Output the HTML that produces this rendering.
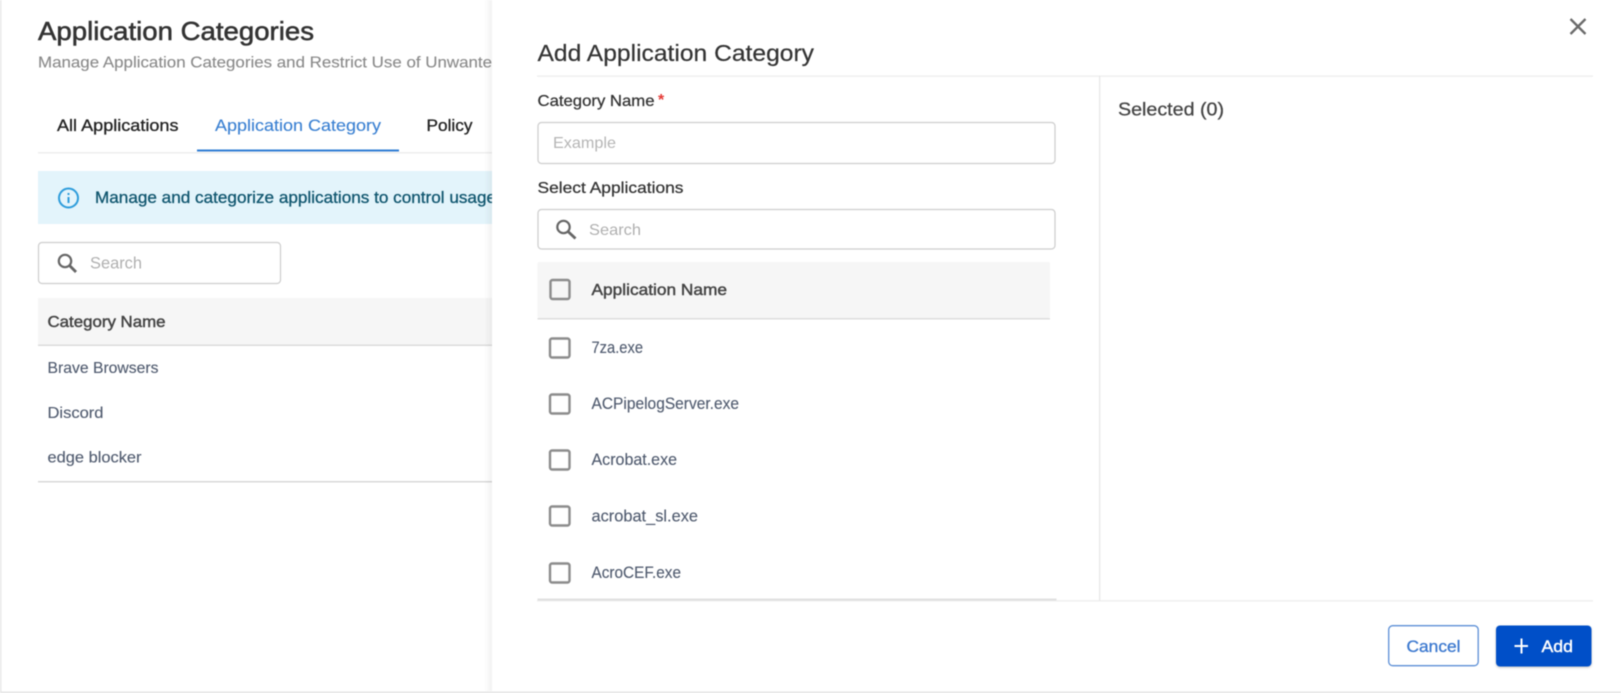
<!DOCTYPE html>
<html lang="en">
<head>
<meta charset="utf-8">
<title>Add Application Category</title>
<style>
html,body{margin:0;padding:0;background:#fff;width:1621px;height:693px;overflow:hidden}
svg{display:block;filter:blur(.4px)}
text{font-family:"Liberation Sans",sans-serif}
</style>
</head>
<body>
<svg width="1621" height="693" viewBox="0 0 1621 693" xmlns="http://www.w3.org/2000/svg">
<defs>
<linearGradient id="sh" x1="0" x2="1" y1="0" y2="0">
<stop offset="0" stop-color="#000" stop-opacity="0"/>
<stop offset="1" stop-color="#000" stop-opacity=".05"/>
</linearGradient>
<clipPath id="left"><rect x="0" y="0" width="492" height="693"/></clipPath>
<filter id="btn" x="-10%" y="-10%" width="120%" height="130%"><feDropShadow dx="0" dy="1" stdDeviation="1" flood-color="#000" flood-opacity=".25"/></filter>
</defs>
<rect width="1621" height="693" fill="#fff"/>
<rect x="0" y="0" width="1.5" height="693" fill="#e8e8e8"/>
<rect x="0" y="691.5" width="1621" height="1.5" fill="#e4e4e4"/>

<g clip-path="url(#left)">
<text x="38" y="40" font-size="26" fill="#333" stroke="#333" stroke-width=".55" textLength="276" lengthAdjust="spacingAndGlyphs">Application Categories</text>
<text x="38" y="67.500" font-size="16" fill="#8a8a8a" stroke="#8a8a8a" stroke-width=".12" textLength="454" lengthAdjust="spacingAndGlyphs">Manage Application Categories and Restrict Use of Unwante</text>
<text x="57" y="131" font-size="16.500" fill="#222" stroke="#222" stroke-width=".3" textLength="121.500" lengthAdjust="spacingAndGlyphs">All Applications</text>
<text x="215" y="131" font-size="16.500" fill="#3a80d2" stroke="#3a80d2" stroke-width=".12" textLength="166" lengthAdjust="spacingAndGlyphs">Application Category</text>
<text x="426.500" y="131" font-size="16.500" fill="#222" stroke="#222" stroke-width=".3" textLength="46" lengthAdjust="spacingAndGlyphs">Policy</text>
<rect x="38" y="152" width="454" height="1.500" fill="#eeeeee"/>
<rect x="197" y="149.500" width="202" height="2" fill="#2f7cd3"/>

<rect x="38" y="171" width="454" height="53" fill="#e3f4fb"/>
<circle cx="68.500" cy="198" r="9.500" fill="none" stroke="#2d9cdb" stroke-width="2"/>
<rect x="67.500" y="197" width="2" height="6" fill="#2d9cdb"/>
<rect x="67.500" y="193" width="2" height="2" fill="#2d9cdb"/>
<text x="95" y="203" font-size="16.500" fill="#10566f" stroke="#10566f" stroke-width=".3" textLength="401" lengthAdjust="spacingAndGlyphs">Manage and categorize applications to control usage</text>

<rect x="38.500" y="242.500" width="242" height="41" rx="3.500" fill="#fff" stroke="#cdcdcd" stroke-width="1.200"/>
<circle cx="65" cy="261" r="6.200" fill="none" stroke="#666" stroke-width="2.200"/>
<path d="M69.500 265.500L76 272" stroke="#666" stroke-width="2.800" fill="none"/>
<text x="90" y="268.500" font-size="16.500" fill="#b0b0b0" textLength="52" lengthAdjust="spacingAndGlyphs">Search</text>

<rect x="38" y="298" width="454" height="47" fill="#f6f6f6"/>
<rect x="38" y="344.500" width="454" height="1.500" fill="#dcdcdc"/>
<text x="47.500" y="326.800" font-size="16" fill="#444" stroke="#444" stroke-width=".45" textLength="118" lengthAdjust="spacingAndGlyphs">Category Name</text>
<text x="47.500" y="373" font-size="16" fill="#4f5a6e" stroke="#4f5a6e" stroke-width=".12" textLength="111" lengthAdjust="spacingAndGlyphs">Brave Browsers</text>
<text x="47.500" y="418" font-size="16" fill="#4f5a6e" stroke="#4f5a6e" stroke-width=".12" textLength="56" lengthAdjust="spacingAndGlyphs">Discord</text>
<text x="47.500" y="462.500" font-size="16" fill="#4f5a6e" stroke="#4f5a6e" stroke-width=".12" textLength="94" lengthAdjust="spacingAndGlyphs">edge blocker</text>
<rect x="38" y="481" width="454" height="1.500" fill="#d8d8d8"/>
</g>

<rect x="484" y="0" width="8" height="691" fill="url(#sh)"/>

<text x="537.500" y="61" font-size="23.500" fill="#333" stroke="#333" stroke-width=".2" textLength="276.500" lengthAdjust="spacingAndGlyphs">Add Application Category</text>
<rect x="537" y="75.500" width="1056" height="1.200" fill="#ececec"/>
<rect x="1099" y="76" width="1.200" height="525" fill="#e6e6e6"/>
<rect x="537" y="600.200" width="1056" height="1.200" fill="#ececec"/>
<path d="M1570.500 19L1585.500 34M1585.500 19L1570.500 34" stroke="#6a6a6a" stroke-width="2.300" fill="none"/>

<text x="537.500" y="105.800" font-size="16" fill="#333" stroke="#333" stroke-width=".25" textLength="117" lengthAdjust="spacingAndGlyphs">Category Name</text>
<text x="658" y="105" font-size="16" font-weight="bold" fill="#e53935">*</text>
<rect x="538" y="122.500" width="517" height="41" rx="3.500" fill="#fff" stroke="#cdcdcd" stroke-width="1.200"/>
<text x="553" y="148" font-size="16" fill="#b5b5b5" textLength="63" lengthAdjust="spacingAndGlyphs">Example</text>

<text x="537.500" y="192.800" font-size="16" fill="#333" stroke="#333" stroke-width=".25" textLength="146" lengthAdjust="spacingAndGlyphs">Select Applications</text>
<rect x="538" y="209.500" width="517" height="39.500" rx="3.500" fill="#fff" stroke="#cdcdcd" stroke-width="1.200"/>
<circle cx="563.500" cy="227" r="6.200" fill="none" stroke="#666" stroke-width="2.200"/>
<path d="M568 231.500L575.500 238.500" stroke="#666" stroke-width="2.800" fill="none"/>
<text x="589" y="235" font-size="16" fill="#b0b0b0" textLength="52" lengthAdjust="spacingAndGlyphs">Search</text>

<rect x="537.500" y="262" width="512.500" height="56" rx="2" fill="#f6f6f6"/>
<rect x="537.500" y="318" width="512.500" height="1.500" fill="#dedede"/>
<rect x="550.500" y="280" width="19" height="19" rx="2" fill="none" stroke="#8c8c8c" stroke-width="2.400"/>
<text x="591.500" y="294.800" font-size="16" fill="#444" stroke="#444" stroke-width=".45" textLength="135.500" lengthAdjust="spacingAndGlyphs">Application Name</text>

<rect x="550" y="338.500" width="19.500" height="19" rx="2" fill="none" stroke="#8c8c8c" stroke-width="2.400"/>
<text x="591.500" y="353" font-size="16.500" fill="#4f5a6e" stroke="#4f5a6e" stroke-width=".12" textLength="51.500" lengthAdjust="spacingAndGlyphs">7za.exe</text>
<rect x="550" y="394.500" width="19.500" height="19" rx="2" fill="none" stroke="#8c8c8c" stroke-width="2.400"/>
<text x="591.500" y="409" font-size="16.500" fill="#4f5a6e" stroke="#4f5a6e" stroke-width=".12" textLength="147.500" lengthAdjust="spacingAndGlyphs">ACPipelogServer.exe</text>
<rect x="550" y="450.500" width="19.500" height="19" rx="2" fill="none" stroke="#8c8c8c" stroke-width="2.400"/>
<text x="591.500" y="465" font-size="16.500" fill="#4f5a6e" stroke="#4f5a6e" stroke-width=".12" textLength="85.500" lengthAdjust="spacingAndGlyphs">Acrobat.exe</text>
<rect x="550" y="506.500" width="19.500" height="19" rx="2" fill="none" stroke="#8c8c8c" stroke-width="2.400"/>
<text x="591.500" y="521.500" font-size="16.500" fill="#4f5a6e" stroke="#4f5a6e" stroke-width=".12" textLength="106.500" lengthAdjust="spacingAndGlyphs">acrobat_sl.exe</text>
<rect x="550" y="563.500" width="19.500" height="19" rx="2" fill="none" stroke="#8c8c8c" stroke-width="2.400"/>
<text x="591.500" y="578" font-size="16.500" fill="#4f5a6e" stroke="#4f5a6e" stroke-width=".12" textLength="89.500" lengthAdjust="spacingAndGlyphs">AcroCEF.exe</text>
<rect x="537.500" y="598.500" width="519" height="2" fill="#e0e0e0"/>

<text x="1118" y="115.500" font-size="18" fill="#444" stroke="#444" stroke-width=".25" textLength="106" lengthAdjust="spacingAndGlyphs">Selected (0)</text>

<rect x="1388.700" y="625.700" width="89.500" height="40" rx="4" fill="#fff" stroke="#5c8fd6" stroke-width="1.300"/>
<text x="1406.500" y="652" font-size="16.500" fill="#3b78cf" stroke="#3b78cf" stroke-width=".3" textLength="54" lengthAdjust="spacingAndGlyphs">Cancel</text>
<rect x="1496" y="625.500" width="95.500" height="41" rx="4" fill="#0050c8" filter="url(#btn)"/>
<path d="M1521.500 638.500V653.500M1514.500 646H1528" stroke="#fff" stroke-width="2" fill="none"/>
<text x="1541.500" y="652" font-size="16.500" fill="#fff" stroke="#fff" stroke-width=".4" textLength="31.500" lengthAdjust="spacingAndGlyphs">Add</text>
</svg>
</body>
</html>
